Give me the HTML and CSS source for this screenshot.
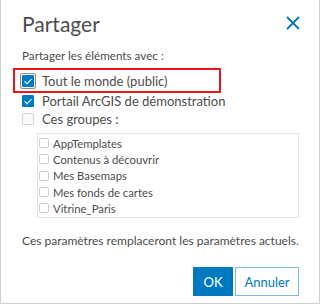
FILE: index.html
```html
<!DOCTYPE html>
<html lang="fr">
<head>
  <meta charset="UTF-8" />
  <title>Partager</title>
  <link rel="stylesheet" href="styles.css">
</head>
<body>
  <div class="dialog">
    <div class="header">
      <h1 class="title">Partager</h1>
      <button class="close" aria-label="Fermer">
        <svg width="14" height="14" viewBox="0 0 14 14">
          <path d="M1 1 L13 13 M13 1 L1 13" stroke="#0079c1" stroke-width="1.8" fill="none" />
        </svg>
      </button>
    </div>

    <div class="content">
      <p class="label">Partager les éléments avec :</p>

      <div class="option highlight">
        <span class="box checked focused"></span>
        <span>Tout le monde (public)</span>
      </div>
      <div class="option">
        <span class="box checked"></span>
        <span>Portail ArcGIS de démonstration</span>
      </div>
      <div class="option">
        <span class="box"></span>
        <span>Ces groupes :</span>
      </div>

      <div class="groups">
        <div class="group"><span class="small-box"></span>AppTemplates</div>
        <div class="group"><span class="small-box"></span>Contenus à découvrir</div>
        <div class="group"><span class="small-box"></span>Mes Basemaps</div>
        <div class="group"><span class="small-box"></span>Mes fonds de cartes</div>
        <div class="group"><span class="small-box"></span>Vitrine_Paris</div>
      </div>

      <p class="note">Ces paramètres remplaceront les paramètres actuels.</p>

      <div class="actions">
        <button class="btn primary">OK</button>
        <button class="btn secondary">Annuler</button>
      </div>
    </div>
  </div>
</body>
</html>
```

FILE: styles.css
```css
html, body {
  margin: 0;
  padding: 0;
}
body {
  font-family: "Lato", "Noto Sans", sans-serif;
  color: #4c4c4c;
  background: #fff;
}
.dialog {
  width: 320px;
  height: 304px;
  box-sizing: border-box;
  border: 1px solid #cfcfcf;
  border-top: none;
  overflow: hidden;
}
.header {
  display: flex;
  justify-content: space-between;
  align-items: center;
  padding: 12px 19px 0 21px;
}
.title {
  margin: 0;
  font-size: 21px;
  line-height: 24px;
  font-weight: 400;
}
.close {
  border: none;
  background: none;
  padding: 0;
  width: 14px;
  height: 14px;
  margin-top: -3px;
  cursor: pointer;
}
.content {
  padding: 0 20px 0 21px;
}
.label {
  margin: 11px 0 7px;
  font-size: 11.7px;
  line-height: 16px;
}
.option {
  display: flex;
  align-items: center;
  gap: 8px;
  height: 18px;
  font-size: 13px;
}
.option.highlight {
  box-sizing: border-box;
  width: 204px;
  height: 21px;
  margin-left: -7px;
  padding-left: 7px;
  outline: 2px solid #e8161b;
}
.option.highlight + .option {
  margin-top: 1px;
}
.box {
  position: relative;
  width: 12px;
  height: 12px;
  box-sizing: border-box;
  border: 1px solid #d4d4d4;
  border-radius: 1px;
  background: #f8f8f8;
  flex: none;
}
.box.checked {
  background: #0079c1;
  border-color: #0079c1;
}
.box.checked::after {
  content: "";
  position: absolute;
  left: 3px;
  top: 1px;
  width: 3px;
  height: 6px;
  border: solid #fff;
  border-width: 0 1.5px 1.5px 0;
  transform: rotate(45deg);
}
.box.focused {
  box-shadow: 0 0 0 1px #fff, 0 0 0 2px #8c8c8c;
}
.groups {
  margin: 5px 0 0 15px;
  border: 1px solid #e4e4e4;
  padding: 1px 0 1px 1px;
}
.group {
  display: flex;
  align-items: center;
  gap: 4px;
  height: 16.3px;
  font-size: 11.3px;
}
.small-box {
  width: 10px;
  height: 10px;
  box-sizing: border-box;
  border: 1px solid #cfcfcf;
  border-radius: 2px;
  background: #fff;
  flex: none;
}
.note {
  margin: 15px 0 0;
  font-size: 12px;
  line-height: 16px;
  white-space: nowrap;
}
.actions {
  display: flex;
  justify-content: flex-end;
  gap: 2px;
  margin-top: 18px;
}
.btn {
  height: 29px;
  padding: 0;
  font-family: inherit;
  font-size: 13px;
  box-sizing: border-box;
  border: 1px solid #0079c1;
  cursor: pointer;
}
.btn.primary {
  width: 40px;
  background: #0079c1;
  color: #fff;
}
.btn.secondary {
  width: 64px;
  background: #fff;
  color: #0079c1;
  border-color: #7fbde2;
}
```
